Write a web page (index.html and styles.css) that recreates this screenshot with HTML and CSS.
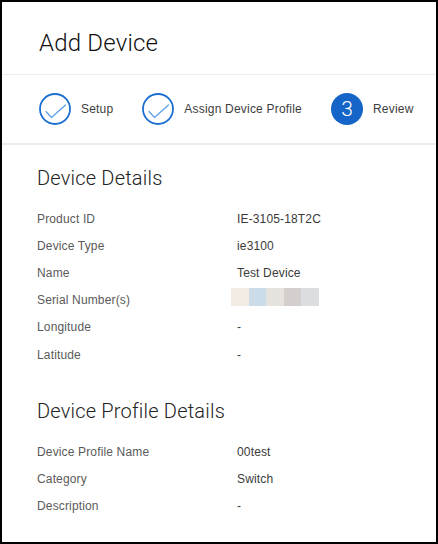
FILE: index.html
```html
<!DOCTYPE html>
<html lang="en">
<head>
<meta charset="utf-8">
<title>Add Device</title>
<link rel="stylesheet" href="styles.css">
</head>
<body>
<div class="frame">
  <header class="header">
    <h1 class="title">Add Device</h1>
  </header>
  <nav class="stepper">
    <div class="step">
      <svg class="step-icon" viewBox="0 0 32 32" width="32" height="32" aria-hidden="true">
        <circle cx="16" cy="16" r="15" fill="none" stroke="#1d6fd1" stroke-width="1.8"/>
        <polyline points="7,18.5 12.5,24.5 26.5,12" fill="none" stroke="#5b9de6" stroke-width="1.2" stroke-linecap="round" stroke-linejoin="round"/>
      </svg>
      <span class="step-label">Setup</span>
    </div>
    <div class="step">
      <svg class="step-icon" viewBox="0 0 32 32" width="32" height="32" aria-hidden="true">
        <circle cx="16" cy="16" r="15" fill="none" stroke="#1d6fd1" stroke-width="1.8"/>
        <polyline points="7,18.5 12.5,24.5 26.5,12" fill="none" stroke="#5b9de6" stroke-width="1.2" stroke-linecap="round" stroke-linejoin="round"/>
      </svg>
      <span class="step-label">Assign Device Profile</span>
    </div>
    <div class="step">
      <span class="step-num">3</span>
      <span class="step-label">Review</span>
    </div>
  </nav>
  <main class="content">
    <section class="section">
      <h2 class="section-title">Device Details</h2>
      <dl class="rows">
        <div class="row"><dt>Product ID</dt><dd>IE-3105-18T2C</dd></div>
        <div class="row"><dt>Device Type</dt><dd>ie3100</dd></div>
        <div class="row"><dt>Name</dt><dd>Test Device</dd></div>
        <div class="row"><dt>Serial Number(s)</dt><dd class="serial"><span class="blur b1"></span><span class="blur b2"></span><span class="blur b3"></span><span class="blur b4"></span><span class="blur b5"></span></dd></div>
        <div class="row"><dt>Longitude</dt><dd>-</dd></div>
        <div class="row"><dt>Latitude</dt><dd>-</dd></div>
      </dl>
    </section>
    <section class="section section-2">
      <h2 class="section-title">Device Profile Details</h2>
      <dl class="rows">
        <div class="row"><dt>Device Profile Name</dt><dd>00test</dd></div>
        <div class="row"><dt>Category</dt><dd>Switch</dd></div>
        <div class="row"><dt>Description</dt><dd>-</dd></div>
      </dl>
    </section>
  </main>
</div>
</body>
</html>
```
FILE: styles.css
```css
html, body {
  margin: 0;
  padding: 0;
  background: #ffffff;
}

.frame {
  width: 438px;
  height: 544px;
  box-sizing: border-box;
  border: 2px solid #000000;
  background: #ffffff;
  overflow: hidden;
  font-family: "Liberation Sans", Arial, sans-serif;
  font-size: 12px;
}

.header {
  height: 73px;
  border-bottom: 1px solid #ececec;
  padding: 26px 0 0 37px;
  box-sizing: border-box;
}

.title {
  margin: 0;
  font-family: Roboto, "Liberation Sans", sans-serif;
  font-weight: 300;
  font-size: 24px;
  line-height: 30px;
  color: #111111;
  letter-spacing: 0.2px;
}

.stepper {
  display: flex;
  align-items: center;
  gap: 29px;
  height: 68px;
  padding: 0 0 0 37px;
  border-bottom: 2px solid #ececec;
}

.step {
  display: flex;
  align-items: center;
  gap: 10px;
}

.step-icon {
  display: block;
  flex: none;
}

.step-num {
  width: 32px;
  height: 32px;
  border-radius: 50%;
  background: #1565c8;
  color: #ffffff;
  display: flex;
  align-items: center;
  justify-content: center;
  font-family: Roboto, "Liberation Sans", sans-serif;
  font-weight: 300;
  font-size: 21px;
  flex: none;
}

.step-label {
  color: #3d3d3d;
  font-size: 12px;
  letter-spacing: 0.2px;
}

.content {
  padding: 21px 0 0 35px;
}

.section-title {
  margin: 0;
  font-family: Roboto, "Liberation Sans", sans-serif;
  font-weight: 300;
  font-size: 20px;
  line-height: 24px;
  color: #222222;
  letter-spacing: 0.2px;
}

.section-2 {
  margin-top: 31px;
}

.rows {
  margin: 15px 0 0 0;
}

.row {
  display: flex;
  align-items: center;
  height: 27.2px;
}

.row dt {
  width: 200px;
  flex: none;
  color: #5a5a5a;
  letter-spacing: 0.15px;
}

.row dd {
  margin: 0;
  color: #3a3a3a;
  letter-spacing: 0.15px;
}

.serial {
  display: flex;
  margin: 0 0 6px -6px !important;
}

.blur {
  display: block;
  width: 17.6px;
  height: 18px;
}

.b1 { background: #f3ece5; }
.b2 { background: #cbdbe7; }
.b3 { background: #e6e2dd; }
.b4 { background: #d4cecd; }
.b5 { background: #dcdde0; }
```
